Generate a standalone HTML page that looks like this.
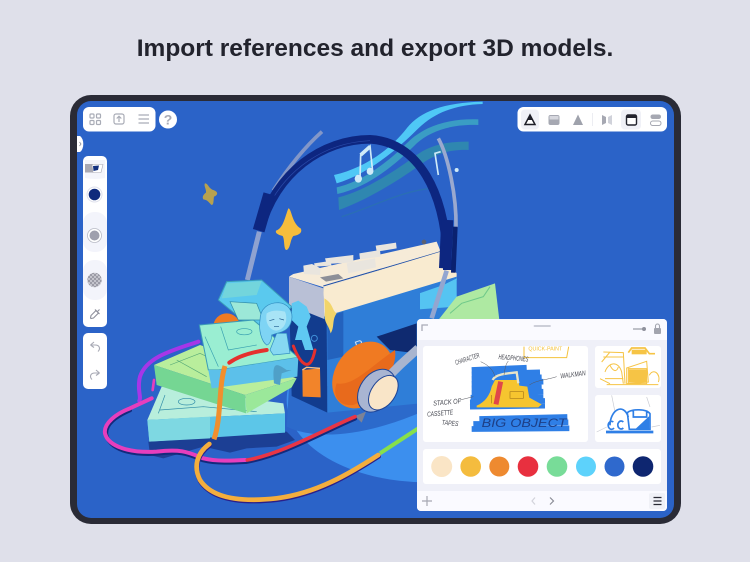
<!DOCTYPE html>
<html><head><meta charset="utf-8">
<style>
html,body{margin:0;padding:0;width:750px;height:562px;overflow:hidden;background:#dfe0ea}
.t{position:absolute;left:0;top:33px;width:750px;text-align:center;font:bold 24.5px/32px "Liberation Sans",sans-serif;color:#22232d}
svg{position:absolute;left:0;top:0}
</style></head><body>
<div class="t">Import references and export 3D models.</div>
<svg width="750" height="562" viewBox="0 0 750 562">
<defs>
<clipPath id="scr"><rect x="77" y="101" width="597" height="417" rx="14"/></clipPath>
<pattern id="ck" width="4" height="4" patternUnits="userSpaceOnUse"><rect width="4" height="4" fill="#c4c4cc"/><rect width="2" height="2" fill="#9b9ba6"/><rect x="2" y="2" width="2" height="2" fill="#9b9ba6"/></pattern>
</defs>
<rect x="70" y="95" width="611" height="429" rx="21" fill="#2a2b36"/>
<rect x="77" y="101" width="597" height="417" rx="14" fill="#2b63c8"/>
<g clip-path="url(#scr)">
<!-- disc -->
<g transform="translate(90,270) scale(.33333)">
<ellipse cx="1010" cy="390" rx="420" ry="247" fill="#3c8fee"/>
<path d="M590,470 C650,500 780,515 985,430 L985,300 L600,300Z" fill="#2c6acb"/>
<path d="M175,515 L590,485 L615,510 L560,530 L470,535 L420,548 L340,530 L220,565 L180,555Z" fill="#1c3f94"/>
</g>
<!-- waves, stars, headphones back -->
<g transform="translate(190,100) scale(.33333)">
<path d="M432,225 C520,205 600,150 650,85 C690,35 760,8 878,5 L878,12 C790,15 730,40 680,90 C630,140 540,220 440,250Z" fill="#4fc8f6"/>
<path d="M440,262 C520,245 600,180 650,130 C700,80 770,55 865,58 L865,75 C780,72 720,95 680,130 C620,190 540,260 442,282Z" fill="#3a9dc4"/>
<path d="M445,292 C520,275 620,210 680,165 C730,130 780,125 836,125 L836,150 C780,148 740,160 690,195 C620,245 530,300 447,330Z" fill="#2f87b0"/>
<path d="M455,350 C550,320 640,270 730,265" fill="none" stroke="#2a6fb4" stroke-width="4"/>
<path d="M295,325 C305,325 305,370 332,385 C338,395 330,405 310,408 C300,420 302,445 290,450 C280,450 285,420 278,408 C265,405 255,400 258,392 C280,385 285,350 295,325Z" fill="#f6bd3c"/>
<path d="M45,250 C55,250 55,265 70,270 C85,275 85,285 72,290 C70,300 72,315 65,315 C58,310 55,300 40,298 C35,290 42,282 48,278 C50,270 40,255 45,250Z" fill="#b7a14f"/>
<g fill="none" stroke="#cfeaf8" stroke-width="5"><path d="M510,238 L512,165 L540,138 L548,215"/><path d="M512,165 L540,140" stroke-width="11"/><path d="M745,225 L735,160 L752,155" /></g>
<ellipse cx="505" cy="236" rx="11" ry="12" fill="#cfeaf8"/><ellipse cx="540" cy="214" rx="10" ry="11" fill="#cfeaf8"/><circle cx="800" cy="210" r="6" fill="#cfeaf8"/>
<!-- grey bands -->
<path d="M172,540 L208,395" stroke="#8fa2d0" stroke-width="15" fill="none"/><path d="M250,272 C290,210 340,145 396,95" stroke="#8397c8" stroke-width="11" fill="none"/>
<path d="M745,115 C775,170 800,290 798,382" stroke="#9aa9cf" stroke-width="11" fill="none"/>
</g>
<!-- boombox -->
<g transform="translate(190,100) scale(.33333)">
<path d="M297,530 L310,522 L740,425 L752,455 L402,562Z" fill="#f6ebd8"/>
<path d="M400,558 L752,455" fill="none" stroke="#1f4fa8" stroke-width="3"/>
<path d="M400,562 L752,455 L800,520 L800,540 L402,650Z" fill="#f9ebd0"/>
<path d="M297,530 L400,565 L404,660 L297,620Z" fill="#b9c0d6"/>
<path d="M402,650 L800,530 L800,770 L402,860Z" fill="#2f7ed8"/>
<path d="M660,590 L760,555 L800,535 L800,620 L660,630Z" fill="#55c4f2"/>
<path d="M590,625 L660,600 L660,670 L590,680Z" fill="#3a91e4"/>
<g fill="#e9e5de"><path d="M340,497 L366,492 L392,505 L390,525 L342,522Z"/><path d="M372,490 L420,483 L425,497 L375,500Z"/><path d="M405,475 L490,465 L490,487 L410,492Z"/><path d="M470,490 L555,475 L558,502 L475,520Z"/><path d="M508,460 L570,450 L572,470 L510,478Z"/><path d="M557,437 L618,428 L620,445 L560,455Z"/></g>
<path d="M390,532 L445,522 L460,535 L408,545Z" fill="#8d8f98"/><circle cx="702" cy="426" r="7" fill="#5b6070"/>
<!-- arrow -->
<path d="M606,636 L625,624 L625,630 L655,626 L655,636 L625,640 L625,648Z" fill="none" stroke="#d5e9fa" stroke-width="3"/>
<!-- green right cassette -->
<path d="M745,660 L800,590 L915,550 L928,660Z" fill="#aee9a2"/><path d="M780,640 L815,610 L880,590 L900,560" fill="none" stroke="#6fc98a" stroke-width="3"/>
<!-- headband -->
<path d="M210,392 C255,215 400,118 540,118 C680,125 772,270 772,510" fill="none" stroke="#0d2680" stroke-width="26"/>
<path d="M235,320 C290,210 400,128 540,122" fill="none" stroke="#2a4aa8" stroke-width="2"/>
<path d="M206,392 L238,282" stroke="#0d2680" stroke-width="36" fill="none"/>
<path d="M772,360 L765,505" stroke="#0d2680" stroke-width="36" fill="none"/>
<path d="M796,380 L790,518" stroke="#0a2170" stroke-width="14" fill="none"/>
<path d="M725,655 L770,512" stroke="#93a6d0" stroke-width="14" fill="none"/>
</g>
<!-- foreground -->
<g transform="translate(90,270) scale(.33333)">
<path d="M598,105 L710,150 L712,428 L605,378Z" fill="#123c8e"/>
<path d="M712,140 L990,55 L990,400 L712,428Z" fill="#2f7ed8"/>
<path d="M712,140 L760,125 L760,260 L712,270Z" fill="#2362bd"/>
<path d="M860,200 L980,160 L980,250 L900,240Z" fill="#0f2a70"/>
<path d="M703,85 C730,100 725,120 740,130 C725,150 735,170 722,190 C715,160 700,160 705,125Z" fill="#f2d56a"/>
<circle cx="673" cy="205" r="9" fill="none" stroke="#3f8fd8" stroke-width="3"/>
<text x="800" y="240" font-family="Liberation Sans,sans-serif" font-size="36" fill="#cfe0f2" transform="rotate(-20 800 240)">R</text>
<path d="M637,300 L690,295 L692,382 L638,380Z" fill="#f2842a"/><path d="M637,300 L650,292 L690,295" fill="none" stroke="#f6c08a" stroke-width="4"/>
<!-- orange cup -->
<ellipse cx="818" cy="315" rx="82" ry="108" transform="rotate(35 818 315)" fill="#f07a22"/>
<path d="M740,340 C790,350 840,290 915,240 C925,300 860,380 790,405 C750,410 725,380 740,340Z" fill="#e86a1c"/>
<path d="M985,235 L930,285 L905,310" stroke="#a9b5cf" stroke-width="26" fill="none"/>
<ellipse cx="860" cy="362" rx="50" ry="70" transform="rotate(35 860 362)" fill="#a9b5d2" stroke="#1f4496" stroke-width="3"/>
<ellipse cx="880" cy="368" rx="36" ry="58" transform="rotate(35 880 368)" fill="#f9e5c8" stroke="#1f4496" stroke-width="3"/>
<path d="M795,438 L828,425 L815,458Z" fill="#7c8296"/>
<!-- back cassette -->
<circle cx="410" cy="170" r="40" fill="#f07a22"/>
<path d="M385,90 L410,35 L515,30 L605,110 L560,170 L470,160Z" fill="#5ac9ee" stroke="#3a9cb8" stroke-width="3"/>
<path d="M410,40 L515,33 L500,75 L395,85Z" fill="#73d5dc"/>
<path d="M420,95 L500,100 L520,150 L445,150Z" fill="#9ce8d8" stroke="#2f8ca8" stroke-width="2"/>
<!-- bottom cassette -->
<path d="M172,450 L215,350 L580,400 L585,430Z" fill="#b8eedc"/>
<path d="M172,450 L585,430 L585,488 L178,515Z" fill="#5cc6e8"/>
<path d="M172,450 L360,440 L360,505 L178,515Z" fill="#7ed8e2"/>
<path d="M205,430 L225,375 M210,420 L340,410 L500,425 M265,395 A25,10 0 1,0 315,395 A25,10 0 1,0 265,395" fill="none" stroke="#2f8ca8" stroke-width="2"/>
<!-- middle green -->
<path d="M192,285 L330,225 L620,325 L465,375Z" fill="#b9ee9c"/>
<path d="M192,285 L465,375 L468,430 L200,345Z" fill="#75d693"/>
<path d="M465,375 L620,325 L605,352 L470,430Z" fill="#9be89a"/>
<path d="M240,285 L330,250 L500,330 M260,270 L350,320" fill="none" stroke="#55a877" stroke-width="2"/>
<!-- top cassette -->
<path d="M328,165 L490,150 L625,262 L385,300 L355,300Z" fill="#9aeed2" stroke="#3b9bb8" stroke-width="3"/>
<path d="M355,300 L385,300 L625,262 L622,320 L365,355Z" fill="#5cc0ea"/>
<path d="M345,200 L385,290 M392,170 L415,240 L500,225 M440,185 A22,9 0 1,0 486,185 A22,9 0 1,0 440,185" fill="none" stroke="#38a0b0" stroke-width="2"/>
<!-- character -->
<path d="M605,100 L625,92 L650,110 L662,140 L650,170 L670,240 L645,240 L635,210 L615,210 L625,170 L605,150Z" fill="#5fc9f2"/>
<path d="M590,300 C560,280 545,270 552,340 L570,345 L575,310 L605,300Z" fill="#4fa0c8"/>
<path d="M560,190 L540,240 L550,255 L600,250 L590,190Z" fill="#86d8f2" stroke="#2f8cc0" stroke-width="2"/>
<path d="M510,150 C510,115 535,98 565,98 C595,100 610,125 605,150 C600,175 585,185 560,190 L545,195 C545,215 535,225 530,225 C515,215 505,180 510,150Z" fill="#7ed4f4" stroke="#2f8cc0" stroke-width="2"/>
<path d="M530,130 C525,155 535,180 560,182 C585,178 595,150 585,125 C565,120 545,120 530,130Z" fill="#a8e4f6"/>
<path d="M538,152 L553,148 M568,146 L582,150 M552,170 L567,170" stroke="#1d5a8c" stroke-width="2" fill="none"/>
<!-- wires -->
<g fill="none" stroke-linecap="round">
<path d="M120,421 C80,438 44,463 49,495 C60,538 120,556 200,551 C280,541 300,556 340,571 C380,581 430,578 468,576 C580,556 700,486 795,446" stroke="#132a7c" stroke-width="12"/>
<path d="M325,215 C250,240 170,260 150,320 C140,360 155,380 148,392" stroke="#a636e8" stroke-width="12"/>
<path d="M185,385 L120,415 C80,430 40,460 45,490 C55,530 120,550 200,545 C280,535 300,550 340,565 C380,575 430,572 466,570" stroke="#e63ebd" stroke-width="12"/>
<path d="M192,330 L188,360" stroke="#e63ebd" stroke-width="8"/>
<path d="M472,570 C580,550 700,480 795,440" stroke="#e93545" stroke-width="11"/>
<path d="M372,508 C395,440 385,350 405,288" stroke="#f08f2e" stroke-width="15" stroke-linecap="butt"/>
<path d="M418,278 C450,255 495,245 530,240" stroke="#e5302e" stroke-width="12"/>
<path d="M610,228 C630,280 660,315 675,240" stroke="#e5302e" stroke-width="9"/>
<path d="M358,522 C320,550 310,590 330,630 C370,692 470,695 560,685 C680,670 780,610 865,555" stroke="#2a1f8a" stroke-width="14" transform="translate(1,4)"/>
<path d="M358,522 C320,550 310,590 330,630 C370,692 470,695 560,685 C680,670 780,610 865,555" stroke="#f4ae3d" stroke-width="14"/>
<path d="M870,550 L985,475" stroke="#86e04c" stroke-width="12" stroke-linecap="butt"/>
</g>
</g>
</g>

<!-- top-left toolbar -->
<rect x="83" y="107" width="72.500" height="24.500" rx="6" fill="#fff"/>
<g fill="none" stroke="#a9acb6" stroke-width="1.200">
<rect x="90" y="114" width="4" height="4" rx="1"/><rect x="96.500" y="114" width="4" height="4" rx="1"/><rect x="90" y="120.500" width="4" height="4" rx="1"/><rect x="96.500" y="120.500" width="4" height="4" rx="1"/>
<rect x="114" y="114" width="10" height="10" rx="2"/><path d="M119,122 L119,116.500 M116.700,118.500 L119,116.200 L121.300,118.500"/>
<path d="M138.500,115 H149 M138.500,119 H149 M138.500,123 H149"/>
</g>
<circle cx="168" cy="119.500" r="9" fill="#fff"/>
<text x="168" y="124.500" text-anchor="middle" font-family="Liberation Sans,sans-serif" font-size="14" font-weight="bold" fill="#a9abb6">?</text>
<!-- handle -->
<path d="M77,136 H80 A5,8.500 0 0 1 80,152 H77Z" fill="#fff"/><path d="M79.500,142 L81,144 L79.500,146" fill="none" stroke="#8a8d98" stroke-width=".8"/>
<!-- left toolbar -->
<rect x="83" y="156" width="24" height="171" rx="5" fill="#fff"/>
<path d="M85,160 H105 V178 Q95,180 85,178Z" fill="#f4f5fb"/>
<rect x="85" y="164" width="8" height="8.500" fill="#a9a9b3"/><path d="M92,164.500 H103 L101,172.500 H93Z" fill="#fff" stroke="#a9a9b3" stroke-width=".6"/><path d="M93,166 L99,165.500 L98,170 L93.500,171Z" fill="#12307f"/>
<circle cx="94.500" cy="194.500" r="7.500" fill="#fff" stroke="#dfe1ec" stroke-width="1"/><circle cx="94.500" cy="194.500" r="5.800" fill="#0f2a7c"/>
<rect x="83" y="212" width="24" height="40" rx="11" fill="#f3f4fb"/>
<circle cx="94.500" cy="235.500" r="7" fill="#fff" stroke="#b9bbc6" stroke-width=".8"/><circle cx="94.500" cy="235.500" r="5" fill="#9fa0ad"/>
<rect x="83" y="260" width="24" height="40" rx="11" fill="#f3f4fb"/>
<circle cx="94.500" cy="280" r="7.200" fill="url(#ck)"/>
<g fill="none" stroke="#8e909c" stroke-width="1.100"><path d="M90.500,318 L91,315.500 L96,310.500 L98.500,313 L93.500,318 L91,318.500Z"/><path d="M95,309.500 L99.500,314 M97.500,311.500 L99.500,309.500"/></g>
<rect x="83" y="333" width="24" height="56" rx="5" fill="#fff"/>
<g fill="none" stroke="#a7a9b4" stroke-width="1.100"><path d="M90.500,345 L94,342 M90.500,345 L94,347.500 M90.500,345 H95 C100,345 100.500,349 98,351.500"/><path d="M99.500,373 L96,370 M99.500,373 L96,375.500 M99.500,373 H95 C90,373 89.500,377 92,379.500"/></g>
<!-- right toolbar -->
<rect x="517.500" y="107" width="149.500" height="24.500" rx="6" fill="#fff"/>
<rect x="521" y="109.500" width="18" height="20" rx="4" fill="#f0f1f7"/>
<rect x="621" y="109.500" width="20" height="20" rx="4" fill="#f0f1f7"/>
<path d="M530,115 L535,124.500 H525Z" fill="#fff" stroke="#1e1f28" stroke-width="1.500"/><path d="M530,115 L532.600,120 H527.400Z" fill="#1e1f28"/>
<rect x="548.500" y="115" width="11" height="10" rx="2" fill="#a6a8b2"/><rect x="549.500" y="116" width="9" height="3.500" fill="#d6d7de"/>
<path d="M578,114.500 L583,125 H573Z" fill="#9fa2ac"/>
<path d="M592.500,113 V126" stroke="#ecedf2" stroke-width="1"/>
<path d="M602,115 L606,117 V123 L602,125Z" fill="#a6a8b2"/><path d="M612,115 L608,117 V123 L612,125Z" fill="#d0d2da"/>
<rect x="626.500" y="115" width="10" height="10" rx="1.500" fill="#fff" stroke="#23242e" stroke-width="1.400"/><rect x="626.500" y="115" width="10" height="3" fill="#23242e"/>
<rect x="650.500" y="114.500" width="10.500" height="4.500" rx="2.200" fill="#a6a8b2"/><rect x="650.500" y="121" width="10.500" height="4.500" rx="2.200" fill="#fff" stroke="#a6a8b2"/>

<!-- reference panel -->
<rect x="417" y="319" width="250" height="192" rx="4" fill="#eff0f8"/>
<path d="M417,340 V323 a4,4 0 0 1 4,-4 H663 a4,4 0 0 1 4,4 V340Z" fill="#fafaff"/>
<path d="M417,491 V507 a4,4 0 0 0 4,4 H663 a4,4 0 0 0 4,-4 V491Z" fill="#fafaff"/>
<path d="M422,331 V325 H428" fill="none" stroke="#a9abb6" stroke-width="1.300"/>
<path d="M534.500,326 H550" stroke="#c6c8d2" stroke-width="1.800" stroke-linecap="round"/>
<path d="M633,329 H643" stroke="#9799a4" stroke-width="1.200"/><circle cx="644" cy="329" r="2" fill="#8f919c"/>
<rect x="654" y="328" width="7" height="6" rx="1" fill="#a2a4ae"/><path d="M655.500,328 V326 a2,2 0 0 1 4,0 V328" fill="none" stroke="#a2a4ae" stroke-width="1.100"/>
<rect x="423" y="346" width="165" height="96" rx="3" fill="#fff"/>
<rect x="595" y="346" width="66" height="42" rx="3" fill="#fff"/>
<rect x="595" y="395" width="66" height="47" rx="3" fill="#fff"/>
<rect x="423" y="449" width="238" height="35" rx="3" fill="#fff"/>
<!-- sketch -->
<g transform="translate(410,315) scale(.33333)">
<path d="M342,95 V128 H470 L476,95" fill="none" stroke="#f4c23c" stroke-width="3"/>
<text x="355" y="106" font-family="Liberation Sans,sans-serif" font-size="16" fill="#f4c23c">QUICK-PAINT</text>
<g stroke="#2f7fe6" fill="none" stroke-width="17">
<path d="M185,165 L350,158 M185,178 L390,172 M185,192 L395,187 M185,206 L400,200 M185,220 L395,215 M185,234 L400,230 M182,248 L400,244 M180,262 L405,258 M180,275 L405,272"/>
<path d="M208,312 L472,306 M190,327 L475,322 M185,342 L478,340"/>
</g>
<path d="M200,272 C225,262 240,240 245,215 L255,195 L325,195 L328,212 L352,215 L358,248 L395,268 L385,277 L200,277Z" fill="#f6c52f"/>
<path d="M248,195 C255,178 290,175 320,172 L325,205" fill="none" stroke="#e9e4c8" stroke-width="7"/>
<path d="M272,200 L258,268" stroke="#e0474a" stroke-width="15"/>
<path d="M300,230 H340 V250 H300Z M245,240 L245,265" fill="none" stroke="#a87a1a" stroke-width="2"/>
<g font-family="Liberation Sans,sans-serif" font-style="italic" fill="#44464f" font-size="21">
<text x="138" y="150" transform="rotate(-18 138 150)" textLength="76" lengthAdjust="spacingAndGlyphs">CHARACTER</text>
<text x="265" y="132" transform="rotate(5 265 132)" textLength="90" lengthAdjust="spacingAndGlyphs">HEADPHONES</text>
<text x="452" y="190" transform="rotate(-7 452 190)" textLength="76" lengthAdjust="spacingAndGlyphs">WALKMAN</text>
<text x="70" y="272" transform="rotate(-5 70 272)" textLength="84" lengthAdjust="spacingAndGlyphs">STACK OF</text>
<text x="52" y="305" transform="rotate(-5 52 305)" textLength="78" lengthAdjust="spacingAndGlyphs">CASSETTE</text>
<text x="95" y="329" transform="rotate(5 95 329)" textLength="50" lengthAdjust="spacingAndGlyphs">TAPES</text>
<text x="215" y="336" font-size="36" fill="#1d3f86" textLength="255" lengthAdjust="spacingAndGlyphs">BIG OBJECT</text>
</g>
<g fill="none" stroke="#55575f" stroke-width="1.500"><path d="M212,140 C235,150 250,165 255,185"/><path d="M295,138 C285,150 285,165 282,180"/><path d="M440,185 C410,195 380,195 358,210"/><path d="M150,255 L190,245"/></g>
</g>
<!-- thumb 1 -->
<g transform="translate(590,342) scale(.33333)" fill="none" stroke="#f6c445" stroke-width="3">
<path d="M115,32 L125,18 H165 L178,35 H195" stroke-width="5"/><path d="M125,30 H170" stroke-width="14"/>
<path d="M110,78 L170,58 L175,120 L110,125Z M115,80 H170 V125 H115Z"/><path d="M40,30 L100,32 L105,125 M35,60 L60,30 M45,90 C55,60 85,55 95,90 L100,125 M60,70 C70,90 80,90 85,75 M50,128 H205 M178,100 A15,20 0 1,1 205,120 M30,110 L60,125 M40,45 H100 M45,110 H100"/>
<rect x="116" y="82" width="54" height="40" fill="#f6c445" stroke="none"/>
</g>
<!-- thumb 2 -->
<g transform="translate(590,342) scale(.33333)" fill="none">
<path d="M65,160 L75,210 M170,165 L180,195 M20,270 L50,255 M185,255 L210,250" stroke="#c8cad2" stroke-width="2"/>
<path d="M60,250 C60,205 100,180 115,225 M112,212 C125,200 170,200 180,215 V262 H118Z M70,240 A10,12 0 1,0 72,258 M100,240 A10,12 0 1,0 100,258 M130,205 V225 H170 V205" stroke="#2f7fe6" stroke-width="5"/>
<path d="M135,262 L178,222 V262Z" fill="#2f7fe6"/>
<path d="M48,270 H190" stroke="#2f7fe6" stroke-width="8"/>
</g>
<!-- swatches -->
<circle cx="441.700" cy="466.500" r="10.500" fill="#fae5c6"/>
<circle cx="470.700" cy="466.500" r="10.300" fill="#f4bc3e"/>
<circle cx="499.300" cy="466.500" r="10" fill="#ee8a30"/>
<circle cx="528" cy="466.500" r="10.300" fill="#e8303f"/>
<circle cx="557" cy="466.500" r="10.300" fill="#78dc98"/>
<circle cx="586" cy="466.500" r="10" fill="#5dd2fb"/>
<circle cx="614.500" cy="466.500" r="10" fill="#2f69cd"/>
<circle cx="643" cy="466.500" r="10.300" fill="#0e2670"/>
<!-- footer -->
<path d="M427,496 V506 M422,501 H432" stroke="#a6a8b2" stroke-width="1.200"/>
<path d="M535,497.500 L532,501 L535,504.500" fill="none" stroke="#d2d3db" stroke-width="1.200"/>
<path d="M550,497.500 L553.500,501 L550,504.500" fill="none" stroke="#8a8c96" stroke-width="1.200"/>
<rect x="649" y="493" width="16" height="16" rx="2" fill="#f0f1f7"/>
<path d="M653.500,497.500 H661.500 M653.500,501 H661.500 M653.500,504.500 H661.500" stroke="#2a2b36" stroke-width="1.300"/>
</svg>
</body></html>
